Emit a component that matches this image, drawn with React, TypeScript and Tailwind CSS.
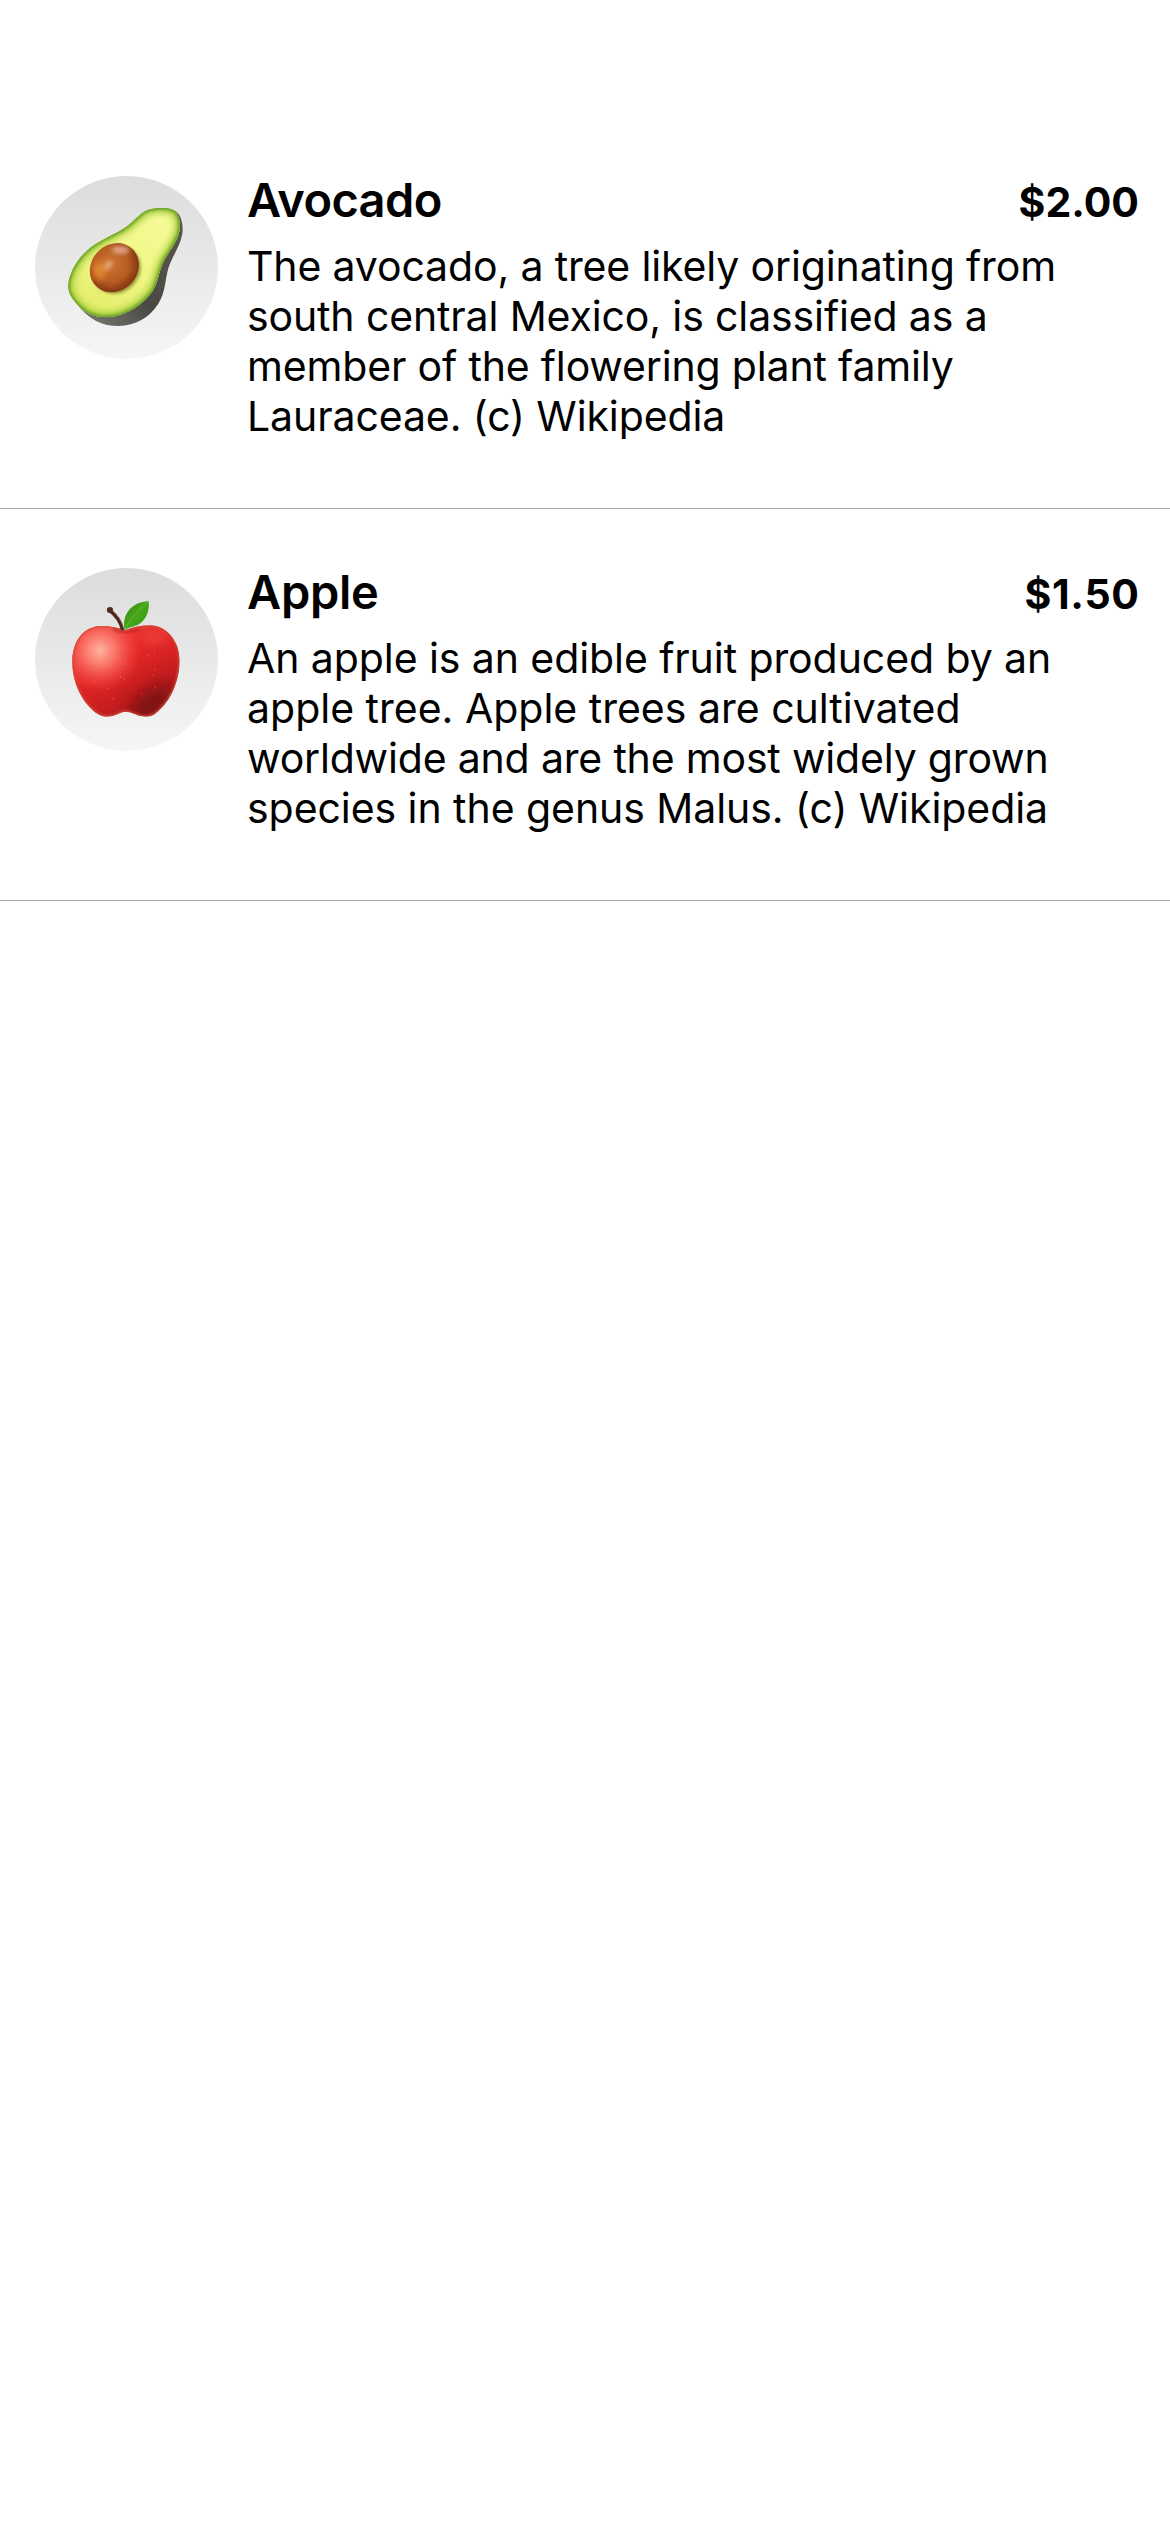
import { type ReactNode } from "react";

const AVOCADO = "M380 151C405 141 438 141 459 149C477 158 483 186 478 214C471 250 444 278 431 304C416 336 416 362 398 394C370 432 326 462 280 470C242 475 208 468 182 444C156 420 141 396 145 370C151 328 180 284 222 255C254 234 288 221 318 201C342 184 358 162 380 151Z";

function AvocadoIcon() {
  return (
    <svg viewBox="45 48 549 549" className="size-full">
      <defs>
        <linearGradient id="av-skin" x1="0.2" y1="1" x2="1" y2="0.2">
          <stop offset="0" stopColor="#73736b" />
          <stop offset="0.4" stopColor="#4b4944" />
          <stop offset="1" stopColor="#5a554d" />
        </linearGradient>
        <linearGradient id="av-flesh" x1="0.8" y1="0" x2="0.3" y2="1">
          <stop offset="0" stopColor="#f8fb9c" />
          <stop offset="0.5" stopColor="#f1f787" />
          <stop offset="1" stopColor="#e2ec68" />
        </linearGradient>
        <radialGradient id="av-pit" cx="0.42" cy="0.42" r="0.6">
          <stop offset="0" stopColor="#cf7636" />
          <stop offset="0.5" stopColor="#b85d24" />
          <stop offset="0.8" stopColor="#8c3a13" />
          <stop offset="1" stopColor="#5c1f0a" />
        </radialGradient>
        <filter id="av-b4" x="-50%" y="-50%" width="200%" height="200%"><feGaussianBlur stdDeviation="4" /></filter>
        <filter id="av-b7" x="-50%" y="-50%" width="200%" height="200%"><feGaussianBlur stdDeviation="7" /></filter>
        <filter id="av-b10" x="-50%" y="-50%" width="200%" height="200%"><feGaussianBlur stdDeviation="11" /></filter>
        <clipPath id="av-clip"><path d={AVOCADO} /></clipPath>
        <clipPath id="av-pit-clip"><ellipse cx="283" cy="323" rx="78" ry="69" transform="rotate(-45 283 323)" /></clipPath>
      </defs>
      <path d="M462 151C482 160 491 190 487 222C480 260 456 290 446 322C434 360 438 395 414 433C388 474 346 497 296 498C248 498 206 480 168 428L280 400L400 300Z" fill="url(#av-skin)" />
      <g clipPath="url(#av-clip)">
        <rect x="130" y="130" width="370" height="360" fill="url(#av-flesh)" />
        <path d={AVOCADO} fill="none" stroke="#a5cd3c" strokeWidth="30" filter="url(#av-b10)" />
        <path d={AVOCADO} fill="none" stroke="#5f9a22" strokeWidth="10" filter="url(#av-b4)" />
        <ellipse cx="290" cy="329" rx="76" ry="68" transform="rotate(-45 290 329)" fill="#7c7c1c" opacity="0.8" filter="url(#av-b4)" />
      </g>
      <g clipPath="url(#av-pit-clip)">
        <rect x="200" y="240" width="170" height="170" fill="url(#av-pit)" />
        <ellipse cx="238" cy="332" rx="18" ry="28" fill="#f09a35" opacity="0.75" filter="url(#av-b10)" />
        <ellipse cx="302" cy="270" rx="27" ry="12" fill="#f0b9a2" opacity="0.75" filter="url(#av-b7)" />
        <ellipse cx="264" cy="316" rx="9" ry="18" transform="rotate(40 264 316)" fill="#f2c3a0" opacity="0.65" filter="url(#av-b7)" />
        <path d="M262 376Q305 364 334 322" fill="none" stroke="#c9702a" strokeWidth="8" opacity="0.45" filter="url(#av-b7)" />
      </g>
    </svg>
  );
}

const APPLE = "M316 240C340 232 364 226 392 226C444 229 479 276 479 334C477 404 445 463 404 492C385 504 362 500 347 493C334 487 326 485 317 485C306 485 299 490 288 494C270 501 250 503 235 493C190 463 158 404 157 338C156 274 190 229 243 228C270 228 296 234 316 240Z";

function AppleIcon() {
  return (
    <svg viewBox="45 54 549 549" className="size-full">
      <defs>
        <linearGradient id="ap-body" x1="0.15" y1="0" x2="0.8" y2="1">
          <stop offset="0" stopColor="#f4403c" />
          <stop offset="0.45" stopColor="#e02425" />
          <stop offset="0.75" stopColor="#c01c1f" />
          <stop offset="1" stopColor="#8c1114" />
        </linearGradient>
        <radialGradient id="ap-shine">
          <stop offset="0" stopColor="#ffb5a2" />
          <stop offset="0.35" stopColor="#ff8577" stopOpacity="0.85" />
          <stop offset="1" stopColor="#ff4a48" stopOpacity="0" />
        </radialGradient>
        <linearGradient id="ap-leaf" x1="0" y1="0" x2="1" y2="1">
          <stop offset="0" stopColor="#2f8a10" />
          <stop offset="0.5" stopColor="#48a81c" />
          <stop offset="1" stopColor="#2f930f" />
        </linearGradient>
        <filter id="ap-b3" x="-50%" y="-50%" width="200%" height="200%"><feGaussianBlur stdDeviation="3" /></filter>
        <filter id="ap-b14" x="-50%" y="-50%" width="200%" height="200%"><feGaussianBlur stdDeviation="16" /></filter>
        <filter id="ap-b26" x="-80%" y="-80%" width="260%" height="260%"><feGaussianBlur stdDeviation="26" /></filter>
        <clipPath id="ap-clip"><path d={APPLE} /></clipPath>
      </defs>
      <g clipPath="url(#ap-clip)">
        <rect x="150" y="220" width="340" height="290" fill="url(#ap-body)" />
        <ellipse cx="395" cy="455" rx="76" ry="34" transform="rotate(-35 395 455)" fill="#650708" opacity="0.75" filter="url(#ap-b26)" />
        <ellipse cx="240" cy="302" rx="125" ry="125" fill="url(#ap-shine)" />
        <ellipse cx="404" cy="262" rx="42" ry="20" fill="#f0504a" opacity="0.6" filter="url(#ap-b14)" />
        <path d="M280 236Q312 256 355 235" fill="none" stroke="#9d1518" strokeWidth="8" opacity="0.5" filter="url(#ap-b3)" />
        <path d={APPLE} fill="none" stroke="#d14a34" strokeWidth="8" filter="url(#ap-b3)" />
      </g>
      <g fill="#ff8b80" opacity="0.4">
        <circle cx="315" cy="342" r="3" /><circle cx="301" cy="381" r="3" /><circle cx="312" cy="387" r="2.5" />
        <circle cx="252" cy="344" r="2.5" /><circle cx="222" cy="357" r="2.5" /><circle cx="262" cy="415" r="2.5" />
        <circle cx="227" cy="393" r="2.5" /><circle cx="383" cy="314" r="2.5" /><circle cx="404" cy="303" r="2.5" />
        <circle cx="401" cy="279" r="2.5" /><circle cx="399" cy="375" r="2.5" /><circle cx="405" cy="410" r="2.5" />
        <circle cx="366" cy="432" r="2.5" /><circle cx="279" cy="447" r="2.5" /><circle cx="404" cy="358" r="2.5" />
      </g>
      <path d="M268 181Q298 202 308 240" fill="none" stroke="#4a2a20" strokeWidth="10" />
      <ellipse cx="270" cy="180" rx="9.5" ry="9" fill="#4b2b22" />
      <path d="M277 181Q300 201 309 228" fill="none" stroke="#8d6350" strokeWidth="2.5" />
      <path d="M313 240C308 204 321 178 346 164C360 156 376 155 386 153C389 178 382 202 363 218C347 231 329 229 313 240Z" fill="url(#ap-leaf)" />
      <path d="M315 237Q338 191 383 157" fill="none" stroke="#8bcf4c" strokeWidth="2" opacity="0.6" />
    </svg>
  );
}

type Line = { text: string; tracking: string };
type Product = {
  name: string;
  nameTracking: string;
  price: string;
  priceTracking: string;
  lines: Line[];
  icon: ReactNode;
};

const products: Product[] = [
  {
    name: "Avocado",
    nameTracking: "tracking-[-0.64px]",
    price: "$2.00",
    priceTracking: "tracking-normal",
    lines: [
      { text: "The avocado, a tree likely originating from", tracking: "tracking-[-0.14px]" },
      { text: "south central Mexico, is classified as a", tracking: "tracking-[-0.13px]" },
      { text: "member of the flowering plant family", tracking: "tracking-[-0.16px]" },
      { text: "Lauraceae. (c) Wikipedia", tracking: "tracking-[-0.1px]" },
    ],
    icon: <AvocadoIcon />,
  },
  {
    name: "Apple",
    nameTracking: "tracking-[-0.3px]",
    price: "$1.50",
    priceTracking: "tracking-[0.7px] -mr-[0.7px]",
    lines: [
      { text: "An apple is an edible fruit produced by an", tracking: "tracking-[-0.08px]" },
      { text: "apple tree. Apple trees are cultivated", tracking: "tracking-normal" },
      { text: "worldwide and are the most widely grown", tracking: "tracking-[-0.18px]" },
      { text: "species in the genus Malus. (c) Wikipedia", tracking: "tracking-[-0.06px]" },
    ],
    icon: <AppleIcon />,
  },
];

function ProductRow({ product }: { product: Product }) {
  return (
    <li className="flex h-[392px] items-start border-b border-[#a9a9a9] pt-[59px] pr-[31px] pl-[35px]">
      <div className="size-[183px] shrink-0 overflow-hidden rounded-full bg-linear-to-b from-[#dcdcdc] to-[#f6f6f6]">
        {product.icon}
      </div>
      <div className="-mt-px ml-[29px] flex-1">
        <div className="flex h-[66px] items-baseline justify-between">
          <h2 className={`text-[47px] leading-[50px] font-semibold ${product.nameTracking}`}>{product.name}</h2>
          <span className={`text-[41px] leading-[50px] font-bold ${product.priceTracking}`}>{product.price}</span>
        </div>
        <p className="text-[41px] leading-[50px]">
          {product.lines.map((line) => (
            <span key={line.text} className={`block whitespace-nowrap ${line.tracking}`}>{line.text}</span>
          ))}
        </p>
      </div>
    </li>
  );
}

export default function App() {
  return (
    <main className="min-h-[2532px] w-[1170px] bg-white pt-[117px] font-['Inter',sans-serif] text-black">
      <ul>
        {products.map((product) => (
          <ProductRow key={product.name} product={product} />
        ))}
      </ul>
    </main>
  );
}
